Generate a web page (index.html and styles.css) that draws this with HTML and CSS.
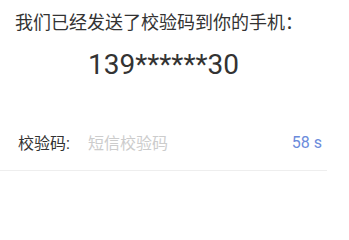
FILE: index.html
```html
<!DOCTYPE html>
<html lang="zh">
<head>
<meta charset="utf-8">
<link rel="stylesheet" href="styles.css">
</head>
<body>
<div class="panel">
  <p class="msg">我们已经发送了校验码到你的手机：</p>
  <p class="phone">139******30</p>
  <div class="field">
    <span class="label">校验码:</span>
    <span class="placeholder">短信校验码</span>
    <span class="timer">58 s</span>
  </div>
</div>
</body>
</html>
```

FILE: styles.css
```css
html, body {
  margin: 0;
  padding: 0;
  background: #fff;
}
body {
  font-family: Roboto, "Noto Sans CJK SC", sans-serif;
  color: #333;
  width: 349px;
  height: 206px;
  overflow: hidden;
}
.panel {
  margin-right: 22px;
}
.msg {
  margin: 0;
  padding: 10px 0 0 15px;
  font-size: 18px;
  line-height: 26px;
  white-space: nowrap;
}
.phone {
  margin: 0;
  padding-top: 12px;
  text-align: center;
  font-size: 28px;
  line-height: 34px;
}
.field {
  margin-top: 41px;
  display: flex;
  align-items: center;
  height: 38px;
  padding: 0 5px 9px 18px;
  border-bottom: 1px solid #eee;
  font-size: 16px;
}
.label {
  color: #333;
  width: 70px;
}
.placeholder {
  color: #ccc;
  flex: 1;
}
.timer {
  color: #6b8bdb;
}
```
